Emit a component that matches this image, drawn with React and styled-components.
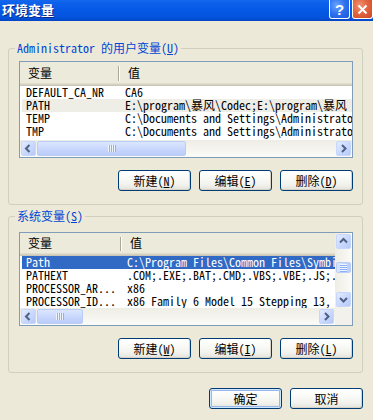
import React from "react";
import styled, { createGlobalStyle } from "styled-components";

const FONT = `"Noto Sans Mono CJK SC", "Liberation Mono", "Noto Sans CJK SC", monospace`;

const Global = createGlobalStyle`
  html, body { margin: 0; padding: 0; background: #ECE9D8; }
  body { font-family: ${FONT}; font-size: 12px; color: #000; }
  * { box-sizing: border-box; }
`;

const Window = styled.div`
  width: 373px;
  height: 420px;
  background: #ECE9D8;
  display: flex;
  flex-direction: column;
  overflow: hidden;
`;

const TitleBar = styled.div`
  height: 21px;
  flex: none;
  display: flex;
  align-items: flex-start;
  background: linear-gradient(to bottom, #1467EE 0%, #0A5FEA 18%, #0558E4 55%, #0452DB 85%, #0345C2 100%);
`;

const Title = styled.div`
  flex: 1;
  padding: 2px 0 0 2px;
  color: #fff;
  font-family: "Noto Sans CJK SC", sans-serif;
  font-weight: bold;
  font-size: 13px;
  line-height: 15px;
  text-shadow: 1px 1px 0 #0A2A8A;
`;

const CaptionButton = styled.div`
  width: 21px;
  height: 19px;
  margin-left: 2px;
  border: 1px solid #fff;
  border-top: none;
  border-radius: 0 0 3px 3px;
  display: flex;
  align-items: center;
  justify-content: center;
  color: #fff;
  font-family: "Liberation Sans", sans-serif;
  font-weight: bold;
  font-size: 15px;
  background: ${(p) =>
    p.$close
      ? "radial-gradient(circle at 35% 30%, #EE9275 0%, #E2653F 45%, #CC4622 100%)"
      : "radial-gradient(circle at 35% 30%, #6AA5FF 0%, #2D70EE 50%, #1C57D8 100%)"};
`;

const Body = styled.div`
  flex: 1;
  display: flex;
  flex-direction: column;
  padding: 0 10px 0 8px;
`;

const GroupBox = styled.fieldset`
  margin: ${(p) => p.$top}px 0 0 0;
  padding: ${(p) => p.$padTop}px 9px 13px 10px;
  border: 1px solid #D0D0BF;
  border-radius: 3px;
  min-width: 0;
`;

const Legend = styled.legend`
  margin-left: -4px;
  padding: 0 2px;
  color: #0046D5;
  font-size: 12px;
  line-height: 14px;
`;

const U = styled.span`
  text-decoration: underline;
`;

const ListView = styled.div`
  height: ${(p) => p.$h}px;
  border: 1px solid #7F9DB9;
  background: #fff;
  display: flex;
  flex-direction: column;
  overflow: hidden;
`;

const ListMain = styled.div`
  flex: 1;
  min-height: 0;
  display: flex;
`;

const ListContent = styled.div`
  flex: 1;
  min-width: 0;
  display: flex;
  flex-direction: column;
  overflow: hidden;
`;

const Header = styled.div`
  height: ${(p) => p.$h}px;
  flex: none;
  display: flex;
  background: #EBEADB;
  box-shadow: inset 0 -1px 0 #CBC7B8, inset 0 -2px 0 #D6D2C2, inset 0 -3px 0 #E2DECD;
`;

const HeaderCell = styled.div`
  flex: ${(p) => (p.$w ? `0 0 ${p.$w}px` : "1 1 0")};
  padding-left: ${(p) => p.$pl}px;
  line-height: ${(p) => p.$h - 3}px;
  white-space: nowrap;
`;

const HeaderDivider = styled.div`
  flex: none;
  width: 2px;
  margin: 4px 0 5px;
  border-left: 1px solid #ACA899;
  border-right: 1px solid #fff;
`;

const Row = styled.div`
  height: 13px;
  flex: none;
  display: flex;
  margin-left: 2px;
  white-space: nowrap;
  background: ${(p) =>
    p.$state === "active" ? "#316AC5" : p.$state === "inactive" ? "#EEEDE6" : "transparent"};
  color: ${(p) => (p.$state === "active" ? "#fff" : "#000")};
`;

const Cell = styled.div`
  flex: ${(p) => (p.$w ? `0 0 ${p.$w}px` : "1 1 0")};
  min-width: 0;
  line-height: 11px;
  overflow-x: clip;
  overflow-y: visible;
  padding-left: ${(p) => p.$pl}px;
`;

const HScrollRow = styled.div`
  height: 17px;
  flex: none;
  display: flex;
`;

const HTrack = styled.div`
  flex: 1;
  display: flex;
  align-items: center;
  padding: 1px;
  background: linear-gradient(to bottom, #EEEDE5, #FBFBF8);
`;

const VTrack = styled.div`
  flex: none;
  width: 17px;
  display: flex;
  flex-direction: column;
  align-items: center;
  padding: 1px;
  background: linear-gradient(to right, #EEEDE5, #FBFBF8);
`;

const Corner = styled.div`
  flex: none;
  width: 17px;
  background: #F2F1EC;
`;

const ArrowButton = styled.div`
  flex: none;
  width: 15px;
  height: 15px;
  border: 1px solid #C6D6FC;
  border-radius: 2px;
  display: flex;
  align-items: center;
  justify-content: center;
  background: linear-gradient(135deg, #E4ECFE 0%, #C8D7FD 55%, #B6CAF7 100%);
`;

const Thumb = styled.div`
  flex: none;
  width: ${(p) => (p.$vertical ? "15px" : `${p.$size}px`)};
  height: ${(p) => (p.$vertical ? `${p.$size}px` : "15px")};
  margin: ${(p) => (p.$vertical ? `${p.$offset}px 0 0 0` : `0 0 0 ${p.$offset}px`)};
  border: 1px solid #B9CDF8;
  border-radius: 2px;
  display: flex;
  align-items: center;
  justify-content: center;
  background: ${(p) =>
    p.$vertical
      ? "linear-gradient(to right, #DCE6FE 0%, #C6D5FC 60%, #BACCF8 100%)"
      : "linear-gradient(to bottom, #DCE6FE 0%, #C6D5FC 60%, #BACCF8 100%)"};
`;

const Grip = styled.div`
  width: ${(p) => (p.$vertical ? "7px" : "8px")};
  height: ${(p) => (p.$vertical ? "8px" : "7px")};
  background: ${(p) =>
    p.$vertical
      ? "repeating-linear-gradient(to bottom, #EEF4FE 0 1px, #8CB0F8 1px 2px)"
      : "repeating-linear-gradient(to right, #EEF4FE 0 1px, #8CB0F8 1px 2px)"};
`;

const Fill = styled.div`
  flex: 1;
`;

const ButtonRow = styled.div`
  display: flex;
  justify-content: flex-end;
  gap: 8px;
  margin-top: ${(p) => p.$top}px;
`;

const Button = styled.button`
  width: 73px;
  height: 21px;
  padding: 0;
  font-family: ${FONT};
  font-size: 12px;
  line-height: 19px;
  color: #000;
  border: 1px solid #003C74;
  border-radius: 3px;
  background: linear-gradient(to bottom, #FFFFFF 0%, #FAFAF8 35%, #F1F1EC 75%, #E2E1DA 100%);
  box-shadow: ${(p) =>
    p.$default
      ? "inset 0 0 0 1px #CEE7FF, inset 0 0 0 2px #98B8EA"
      : "inset -1px -1px 0 #D8D3C8"};
`;

const chevrons = {
  left: "M7.5 3 L4 6.5 L7.5 10",
  right: "M5 3 L8.5 6.5 L5 10",
  up: "M3 7.5 L6.5 4 L10 7.5",
  down: "M3 5 L6.5 8.5 L10 5",
};

const Chevron = ({ dir }) => (
  <svg width="13" height="13" viewBox="0 0 13 13">
    <path d={chevrons[dir]} fill="none" stroke="#4D6185" strokeWidth="2" />
  </svg>
);

const HScroll = ({ thumb, corner }) => (
  <HScrollRow>
    <HTrack>
      <ArrowButton><Chevron dir="left" /></ArrowButton>
      <Thumb $size={thumb} $offset={1}><Grip /></Thumb>
      <Fill />
      <ArrowButton><Chevron dir="right" /></ArrowButton>
    </HTrack>
    {corner && <Corner />}
  </HScrollRow>
);

const VScroll = () => (
  <VTrack>
    <ArrowButton><Chevron dir="up" /></ArrowButton>
    <Thumb $vertical $size={11} $offset={13}><Grip $vertical /></Thumb>
    <Fill />
    <ArrowButton><Chevron dir="down" /></ArrowButton>
  </VTrack>
);

const VarList = ({ rows, height, headerH, col1, col1Row, col2Pad, valPad, thumb, vscroll }) => (
  <ListView $h={height}>
    <ListMain>
      <ListContent>
        <Header $h={headerH}>
          <HeaderCell $w={col1} $pl={8} $h={headerH}>变量</HeaderCell>
          <HeaderDivider />
          <HeaderCell $pl={col2Pad} $h={headerH}>值</HeaderCell>
        </Header>
        {rows.map((r) => (
          <Row key={r.name} $state={r.state}>
            <Cell $w={col1Row} $pl={4}>{r.name}</Cell>
            <Cell $pl={valPad}>{r.value}</Cell>
          </Row>
        ))}
      </ListContent>
      {vscroll && <VScroll />}
    </ListMain>
    <HScroll thumb={thumb} corner={vscroll} />
  </ListView>
);

const userVars = [
  { name: "DEFAULT_CA_NR", value: "CA6" },
  { name: "PATH", value: "E:\\program\\暴风\\Codec;E:\\program\\暴风", state: "inactive" },
  { name: "TEMP", value: "C:\\Documents and Settings\\Administrator\\Local Settings\\Temp" },
  { name: "TMP", value: "C:\\Documents and Settings\\Administrator\\Local Settings\\Temp" },
];

const systemVars = [
  { name: "Path", value: "C:\\Program Files\\Common Files\\Symbian\\Tools;C:\\WINDOWS", state: "active" },
  { name: "PATHEXT", value: ".COM;.EXE;.BAT;.CMD;.VBS;.VBE;.JS;.JSE;.WSF;.WSH" },
  { name: "PROCESSOR_AR...", value: "x86" },
  { name: "PROCESSOR_ID...", value: "x86 Family 6 Model 15 Stepping 13, GenuineIntel" },
];

export default function App() {
  return (
    <>
      <Global />
      <Window>
        <TitleBar>
          <Title>环境变量</Title>
          <CaptionButton>?</CaptionButton>
          <CaptionButton $close>
            <svg width="11" height="11" viewBox="0 0 11 11">
              <path d="M1.5 1.5 L9.5 9.5 M9.5 1.5 L1.5 9.5" stroke="#fff" strokeWidth="2" />
            </svg>
          </CaptionButton>
        </TitleBar>
        <Body>
          <GroupBox $top={20} $padTop={6}>
            <Legend>Administrator 的用户变量(<U>U</U>)</Legend>
            <VarList
              rows={userVars}
              height={97}
              headerH={24}
              col1={98}
              col1Row={97}
              col2Pad={8}
              valPad={6}
              thumb={149}
            />
            <ButtonRow $top={12}>
              <Button>新建(<U>N</U>)</Button>
              <Button>编辑(<U>E</U>)</Button>
              <Button>删除(<U>D</U>)</Button>
            </ButtonRow>
          </GroupBox>
          <GroupBox $top={4} $padTop={9}>
            <Legend>系统变量(<U>S</U>)</Legend>
            <VarList
              rows={systemVars}
              height={94}
              headerH={23}
              col1={100}
              col1Row={99}
              col2Pad={8}
              valPad={6}
              thumb={46}
              vscroll
            />
            <ButtonRow $top={12}>
              <Button>新建(<U>W</U>)</Button>
              <Button>编辑(<U>I</U>)</Button>
              <Button>删除(<U>L</U>)</Button>
            </ButtonRow>
          </GroupBox>
          <ButtonRow $top={15}>
            <Button $default>确定</Button>
            <Button>取消</Button>
          </ButtonRow>
        </Body>
      </Window>
    </>
  );
}
